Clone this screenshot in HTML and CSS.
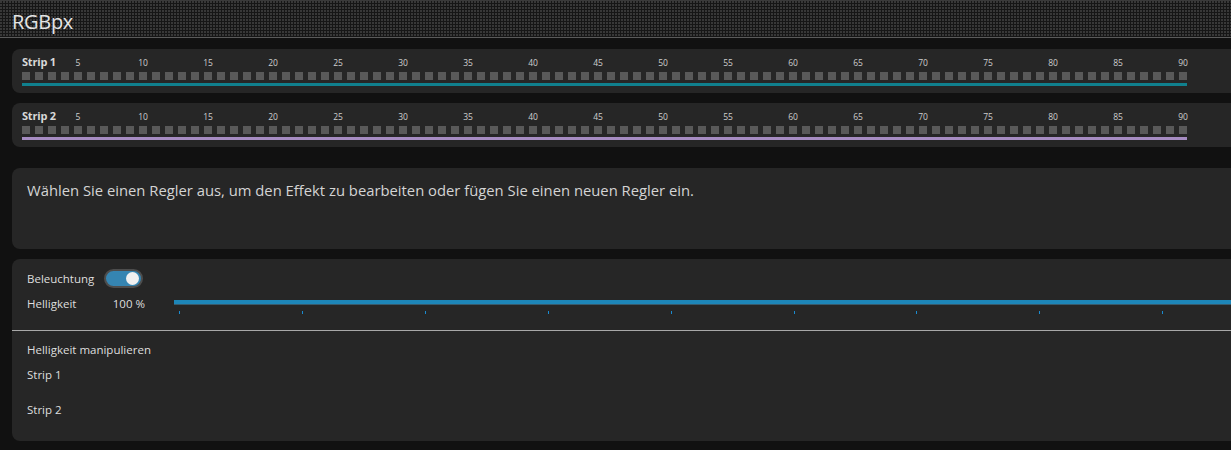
FILE: index.html
```html
<!DOCTYPE html>
<html lang="de">
<head>
<meta charset="utf-8">
<title>RGBpx</title>
<link rel="stylesheet" href="styles.css">
</head>
<body>
<header class="topbar">
  <h1 class="title">RGBpx</h1>
</header>
<main class="content">
  <section class="card strip-card">
    <div class="ruler">
      <span class="strip-name">Strip 1</span>
      <span class="num c5">5</span><span class="num c10">10</span><span class="num c15">15</span><span class="num c20">20</span><span class="num c25">25</span><span class="num c30">30</span><span class="num c35">35</span><span class="num c40">40</span><span class="num c45">45</span><span class="num c50">50</span><span class="num c55">55</span><span class="num c60">60</span><span class="num c65">65</span><span class="num c70">70</span><span class="num c75">75</span><span class="num c80">80</span><span class="num c85">85</span><span class="num c90">90</span>
    </div>
    <div class="pixels"></div>
    <div class="strip-line teal"></div>
  </section>
  <section class="card strip-card">
    <div class="ruler">
      <span class="strip-name">Strip 2</span>
      <span class="num c5">5</span><span class="num c10">10</span><span class="num c15">15</span><span class="num c20">20</span><span class="num c25">25</span><span class="num c30">30</span><span class="num c35">35</span><span class="num c40">40</span><span class="num c45">45</span><span class="num c50">50</span><span class="num c55">55</span><span class="num c60">60</span><span class="num c65">65</span><span class="num c70">70</span><span class="num c75">75</span><span class="num c80">80</span><span class="num c85">85</span><span class="num c90">90</span>
    </div>
    <div class="pixels"></div>
    <div class="strip-line lilac"></div>
  </section>

  <section class="card message-card">
    <p class="message">Wählen Sie einen Regler aus, um den Effekt zu bearbeiten oder fügen Sie einen neuen Regler ein.</p>
  </section>

  <section class="card settings-card">
    <div class="setting-row toggle-row">
      <span class="label">Beleuchtung</span>
      <span class="toggle on"><span class="knob"></span></span>
    </div>
    <div class="setting-row slider-row">
      <span class="label">Helligkeit</span>
      <span class="value">100 %</span>
      <div class="slider">
        <div class="track"></div>
        <div class="ticks"></div>
      </div>
    </div>
    <hr class="divider">
    <div class="manip">
      <div class="manip-title">Helligkeit manipulieren</div>
      <div class="manip-item">Strip 1</div>
      <div class="manip-item second">Strip 2</div>
    </div>
  </section>
</main>
</body>
</html>
```

FILE: styles.css
```css
html, body {
  margin: 0;
  padding: 0;
  background: #111111;
  overflow: hidden;
  font-family: "Open Sans", "Noto Sans", sans-serif;
  color: #dcdcdc;
}

.topbar {
  height: 36px;
  border-top: 1px solid #3a3a3a;
  border-bottom: 1px solid #5a5a5a;
  background-color: #161616;
  background-image: radial-gradient(circle at 1px 1px, #383838 0.9px, transparent 1.1px);
  background-size: 3px 3px;
  padding: 0 12px;
  box-sizing: content-box;
}

.title {
  margin: 0;
  padding-top: 7px;
  font-size: 20px;
  line-height: 27px;
  font-weight: 400;
  color: #e4e4e4;
  letter-spacing: -0.3px;
}

.content {
  padding: 11px 0 0 12px;
  width: calc(100vw + 40px);
  box-sizing: border-box;
  display: flex;
  flex-direction: column;
}

.card {
  background: #262626;
  border-radius: 8px;
}

/* Strip cards */
.strip-card {
  height: 44px;
  box-sizing: border-box;
  padding: 6px 0 0 10px;
  margin-bottom: 10px;
}
.strip-card + .strip-card { margin-bottom: 21px; }

.ruler {
  display: grid;
  grid-template-columns: repeat(90, 8px);
  column-gap: 5px;
  height: 14px;
  align-items: end;
  margin-bottom: 3px;
}

.strip-name {
  grid-column: 1 / 5;
  grid-row: 1;
  justify-self: start;
  font-size: 11px;
  font-weight: 700;
  line-height: 14px;
  color: #d8d8d8;
  white-space: nowrap;
  letter-spacing: -0.2px;
  align-self: start;
}

.num {
  grid-row: 1;
  display: flex;
  justify-content: center;
  font-size: 8.5px;
  line-height: 11px;
  color: #cfcfcf;
  white-space: nowrap;
  align-self: start;
  padding-top: 2px;
}
.c5 { grid-column: 5; } .c10 { grid-column: 10; } .c15 { grid-column: 15; }
.c20 { grid-column: 20; } .c25 { grid-column: 25; } .c30 { grid-column: 30; }
.c35 { grid-column: 35; } .c40 { grid-column: 40; } .c45 { grid-column: 45; }
.c50 { grid-column: 50; } .c55 { grid-column: 55; } .c60 { grid-column: 60; }
.c65 { grid-column: 65; } .c70 { grid-column: 70; } .c75 { grid-column: 75; }
.c80 { grid-column: 80; } .c85 { grid-column: 85; } .c90 { grid-column: 90; }

.pixels {
  width: 1165px;
  height: 8px;
  background: repeating-linear-gradient(to right, #595959 0 8px, transparent 8px 13px);
  margin-bottom: 3px;
}

.strip-line {
  width: 1165px;
  height: 3px;
}
.strip-line.teal { background: #10808e; }
.strip-line.lilac { background: #a68cc2; }

/* Message card */
.message-card {
  height: 81px;
  box-sizing: border-box;
  padding: 11px 15px 0;
  margin-bottom: 10px;
}
.message {
  margin: 0;
  font-size: 14.8px;
  line-height: 22px;
  color: #d4d4d4;
}

/* Settings card */
.settings-card {
  height: 182px;
  box-sizing: border-box;
  padding-top: 10px;
}

.setting-row {
  display: flex;
  align-items: center;
  padding-left: 15px;
  font-size: 11.5px;
  color: #dedede;
}

.toggle-row {
  height: 19px;
}
.toggle-row .label { width: 77px; }

.toggle {
  width: 39px;
  height: 19px;
  box-sizing: border-box;
  border: 2px solid #4d4d4d;
  border-radius: 10px;
  background: #3585b2;
  display: flex;
  align-items: center;
  justify-content: flex-end;
  padding-right: 2px;
}
.knob {
  width: 13px;
  height: 13px;
  border-radius: 50%;
  background: #f0f0f0;
}

.slider-row {
  margin-top: 4px;
  height: 24px;
  align-items: flex-start;
}
.slider-row .label {
  width: 88px;
  line-height: 24px;
}
.slider-row .value {
  width: 30px;
  line-height: 24px;
  display: flex;
  justify-content: flex-end;
  white-space: nowrap;
  margin-right: 29px;
}
.slider {
  flex: 1;
  padding-top: 8px;
}
.track {
  height: 4px;
  background: #1d86b8;
  border-bottom: 1px solid #385a6b;
}
.ticks {
  margin-top: 6px;
  height: 3px;
  background: repeating-linear-gradient(to right, transparent 0 5px, #1a8bd0 5px 6px, transparent 6px 122.9px);
}

.divider {
  margin: 14px 0 0;
  border: 0;
  height: 1px;
  background: #a8a8a8;
}

.manip {
  padding: 9px 0 0 15px;
  font-size: 11.5px;
  color: #dedede;
}
.manip-title { line-height: 20px; }
.manip-item { line-height: 20px; margin-top: 5px; }
.manip-item.second { margin-top: 15px; }
```
